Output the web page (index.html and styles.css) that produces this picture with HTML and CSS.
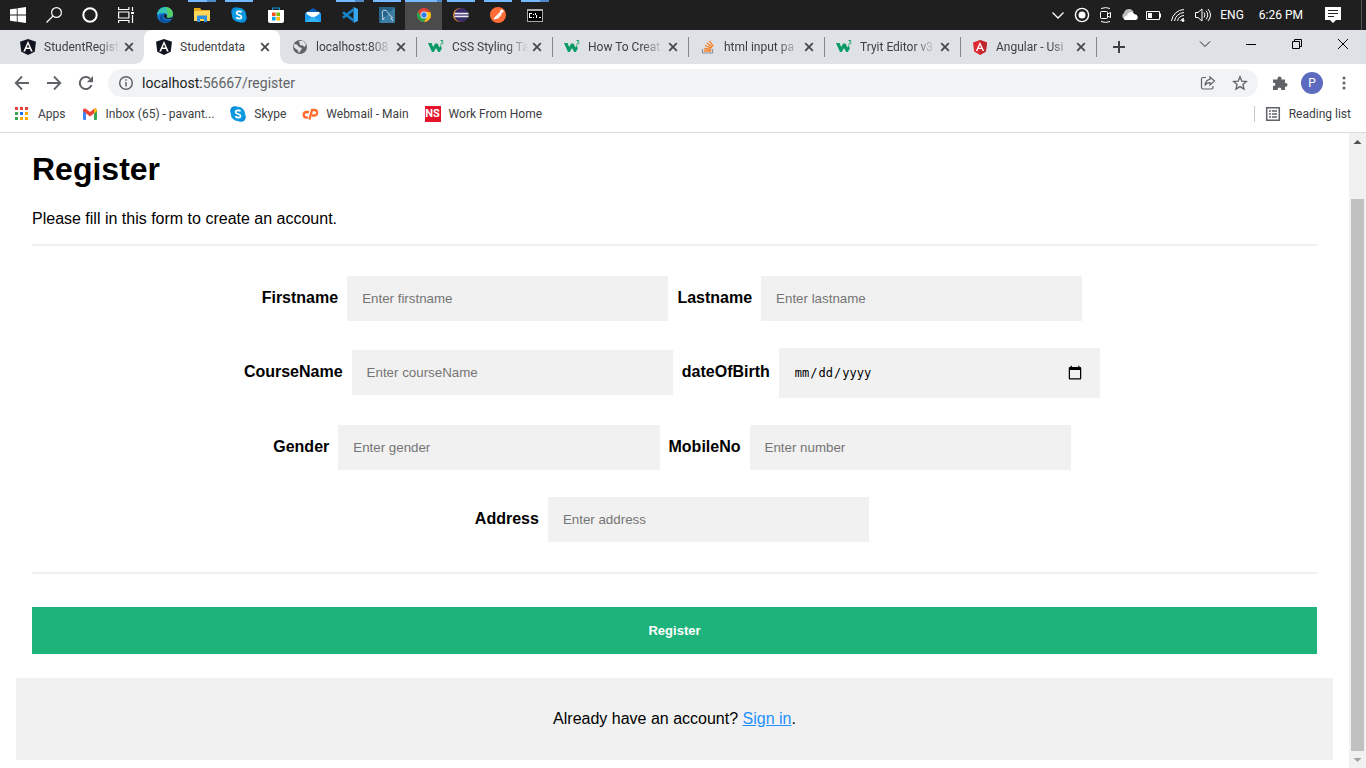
FILE: index.html
```html
<!DOCTYPE html>
<html lang="en">
<head>
<meta charset="utf-8">
<title>Studentdata</title>
<link rel="stylesheet" href="styles.css">
</head>
<body>
<svg class="defs" aria-hidden="true">
  <symbol id="close" viewBox="0 0 16 16"><path d="M4.2 4.2l7.6 7.6M11.8 4.2l-7.6 7.6" stroke="#45494d" stroke-width="1.8" fill="none"/></symbol>
  <symbol id="angular-dark" viewBox="0 0 16 16"><path d="M8 0l8 2.7-1.3 10L8 16l-6.700-3.300L0 2.700z" fill="#10141f"/><path d="M8 2L3.300 12.400h1.800l.9-2.300h4l.9 2.300h1.800zm0 3.300l1.400 3.300H6.600z" fill="#fff"/></symbol>
  <symbol id="angular-red" viewBox="0 0 16 16"><path d="M8 1l7 2.400-1.100 9.200L8 16l-5.900-3.400L1 3.400z" fill="#dd2c33"/><path d="M8 1l7 2.400-1.100 9.200L8 16z" fill="#c0262e"/><path d="M8 3L3.800 12h1.600l.8-2h3.600l.8 2h1.600zm0 3l1.200 2.700H6.800z" fill="#fff"/></symbol>
  <symbol id="w3" viewBox="0 0 16 16"><path d="M0 4h3.500l1.800 4L7 4.500h2.500l2 4 1.300-2.500 1 3.500-2 3.500h-1.500L8 9l-2.200 4H4z" fill="#0a9a63"/><path d="M12.500 1.500h2.300L13.600 3c1.900 0 1.700 2.200-.2 2.200l-1-.4" stroke="#0a9a63" stroke-width=".9" fill="none"/></symbol>
  <symbol id="chev" viewBox="0 0 16 16"><path d="M2.500 5.500L8 11l5.500-5.500" stroke="currentColor" stroke-width="1.300" fill="none"/></symbol>
  <symbol id="skype" viewBox="0 0 16 16"><circle cx="5" cy="5" r="4.800" fill="#0a86d8"/><circle cx="11" cy="11" r="4.800" fill="#0a86d8"/><circle cx="8" cy="8" r="7.200" fill="#0b99e0"/><path d="M10.600 5.300C9.500 4 5.700 4 5.700 6.200c0 2.300 4.800 1.300 4.800 3.700 0 2.100-3.900 2.100-5.200.5" fill="none" stroke="#fff" stroke-width="1.700"/></symbol>
</svg>

<header class="browser">
  <nav class="taskbar" aria-label="Taskbar">
    <div class="system">
      <button class="slot" aria-label="Start"><svg viewBox="0 0 16 16" fill="#fff"><path d="M0 2.300L6.800 1.400v6.200H0zM7.600 1.300L16 0v7.600H7.600zM0 8.500h6.800v6.200L0 13.800zM7.600 8.500H16V16l-8.400-1.200z"/></svg></button>
      <button class="slot" aria-label="Search"><svg viewBox="0 0 16 16" fill="none" stroke="#fff" stroke-width="1.200"><circle cx="10.500" cy="5.500" r="4.900"/><path d="M7 9L.5 15.500"/></svg></button>
      <button class="slot" aria-label="Cortana"><svg viewBox="0 0 16 16" fill="none" stroke="#fff" stroke-width="2"><circle cx="8" cy="8" r="6.700"/></svg></button>
      <button class="slot" aria-label="Task view"><svg viewBox="0 0 16 16" fill="none" stroke="#fff" stroke-width="1.200"><path d="M.6 0v2.500h10.300V0M.6 16v-2.500h10.300V16M.6 5h10.300v6H.6zM14.500 0v4M14.500 8v8"/><path d="M13 5h3v2h-3z" fill="#fff" stroke="none"/></svg></button>
    </div>
    <div class="apps">
      <button class="app" aria-label="Edge"><svg viewBox="0 0 16 16"><circle cx="8" cy="8" r="8" fill="#1478d0"/><path d="M0 8C1 0 8 0 8 0c6 0 8 4.500 8 7.500C16 11 11 11.500 9.700 10c1.500-2 .3-4-2.700-4-3.500 0-6 1-7 2z" fill="#35c3b4"/><path d="M9 .1c5 .5 7 4.500 7 7.400 0 3-4.500 4-6.300 2.500 2-3 .3-7-.7-9.900z" fill="#62d14f" opacity=".75"/><path d="M6 7c-2 5 3 8 8 5.500-2.500 4-8 4-10.500 1.500C1.500 11 3 7.500 6 7z" fill="#0c4f9c"/><path d="M7.500 7c-2 2.500 0 6 7 4.800l.7-1.500C12 11.500 9 11 9.700 10c.7-1.500-.5-3-2.200-3z" fill="#1f1f1f"/></svg></button>
      <button class="app open multi" aria-label="File Explorer"><svg viewBox="0 0 16 16"><path d="M0 1h6l1.500 2H16v11H0z" fill="#e9a91c"/><path d="M0 4h16v10H0z" fill="#ffd55a"/><path d="M3 15V8.500h10V15h-3v-3H6v3z" fill="#2e8fe0"/></svg></button>
      <button class="app open" aria-label="Skype"><svg><use href="#skype"/></svg></button>
      <button class="app" aria-label="Store"><svg viewBox="0 0 16 16"><path d="M4.500 4V1h7v3" fill="none" stroke="#1592d6" stroke-width="1.200"/><path d="M0 3h16v11q0 2-2 2H2q-2 0-2-2z" fill="#fff"/><path d="M4 5.500h3.600v3.600H4z" fill="#f25022"/><path d="M8.400 5.500H12v3.600H8.400z" fill="#7fba00"/><path d="M4 9.900h3.600v3.600H4z" fill="#00a4ef"/><path d="M8.400 9.900H12v3.600H8.400z" fill="#ffb900"/></svg></button>
      <button class="app" aria-label="Mail"><svg viewBox="0 0 16 16"><path d="M0 6l8-5 8 5v9H0z" fill="#0a5fb4"/><path d="M1.500 5h13v6h-13z" fill="#fff"/><path d="M0 6l8 5 8-5v9H0z" fill="#1c9cf0"/><path d="M0 15l8-5.500L16 15z" fill="#35b6fa"/></svg></button>
      <button class="app open multi" aria-label="Visual Studio Code"><svg viewBox="0 0 16 16"><path d="M11.500 0L16 2v12l-4.500 2z" fill="#35a7ee"/><path d="M1 5.300l10.500 8.200M1 10.700L11.500 2.500" stroke="#1684ca" stroke-width="2.600"/></svg></button>
      <button class="app open" aria-label="MySQL Workbench"><svg viewBox="0 0 16 16"><rect width="16" height="16" rx="1.500" fill="#3b7da3"/><path d="M0 0h16L0 16z" fill="#286489"/><path d="M3.500 13c1-3-1.500-8 1-9.800C8.500 3 9 6 10.500 8c1 1.500 2.500 1.500 3 3l-1.500.5 2 2.500M3.500 13l2-2.500" fill="none" stroke="#d9edf5" stroke-width=".9"/></svg></button>
      <button class="app open multi current" aria-label="Chrome"><svg viewBox="0 0 16 16"><circle cx="8" cy="8" r="7" fill="#e34133"/><path d="M1.900 4.500A7 7 0 0 0 8 15l3.500-5.500H5z" fill="#2ba24c"/><path d="M8 15a7 7 0 0 0 6.300-10H8l3.300 5z" fill="#fbc116"/><circle cx="8" cy="8" r="3.500" fill="#fff"/><circle cx="8" cy="8" r="2.700" fill="#2f7de9"/></svg></button>
      <button class="app open" aria-label="Eclipse"><svg viewBox="0 0 16 16"><circle cx="7" cy="8" r="7" fill="#e88a2e"/><circle cx="8.300" cy="8" r="7" fill="#392b68"/><path d="M1.500 6.500h14M1.500 9.500h14" stroke="#eceaf3" stroke-width="1.300"/><path d="M1.500 8h14" stroke="#978bb6"/></svg></button>
      <button class="app open" aria-label="Postman"><svg viewBox="0 0 16 16"><circle cx="8" cy="8" r="8" fill="#ff6c37"/><path d="M4 12l7.500-7.500M5 11.500l3-1 3.500-4" stroke="#fff" stroke-width="1.500" fill="none"/><circle cx="11.800" cy="4.300" r="1.700" fill="#fff"/></svg></button>
      <button class="app open multi" aria-label="Command Prompt"><svg viewBox="0 0 16 16" shape-rendering="crispEdges"><path d="M0 2h16v13H0z" fill="#aaa"/><path d="M1 4h14v10H1z" fill="#000"/><path d="M2 6h3v1H3v3h2v1H2zM6 7h1v1H6zM6 10h1v1H6zM8 6h1v2H8zM9 8h1v3H9zM12 10h2v1h-2z" fill="#fff"/></svg></button>
    </div>
    <div class="tray">
      <svg><use href="#chev"/></svg>
      <svg viewBox="0 0 16 16"><circle cx="8" cy="8" r="6.600" fill="none" stroke="#fff" stroke-width="1.400"/><circle cx="8" cy="8" r="3.500" fill="#fff"/></svg>
      <svg viewBox="0 0 16 16" fill="none" stroke="#fff"><rect x="2.500" y="4.500" width="7" height="7" rx="1"/><path d="M9.500 7l3-1.500v5l-3-1.500M3 1.500Q8-.3 12 1.500M3 14.500q5 1.800 9 0"/></svg>
      <svg viewBox="0 0 16 16"><path d="M2 12a3.500 3.500 0 0 1 0-6A5 5 0 0 1 11.500 5l-6 7z" fill="#bbb"/><path d="M2.500 13a3 3 0 0 1 2.500-4.500A4 4 0 0 1 12.500 7.300 3 3 0 0 1 14 13z" fill="#fff"/></svg>
      <svg viewBox="0 0 16 16" fill="none" stroke="#fff"><path d="M.5 4.500h13v8H.5z"/><path d="M14.500 6.500v4"/><path d="M2 6h4v5H2z" fill="#fff" stroke="none"/></svg>
      <svg viewBox="0 0 16 16" fill="none" stroke="#fff"><path d="M1.500 14A13 13 0 0 1 14 2.500M4.500 14A10 10 0 0 1 14 5.500M7.500 14A7 7 0 0 1 14 8.500M10.500 14A4 4 0 0 1 14 11.500"/><circle cx="13" cy="13.500" r="1" fill="#fff"/></svg>
      <svg class="wide" viewBox="0 0 18 16" fill="none" stroke="#fff"><path d="M1.500 5.500h2.500l4-3.500v12l-4-3.500H1.500zM10 5.500q2 2.500 0 5M12 3.700q3.500 4.300 0 8.600M14 2q5 6 0 12"/></svg>
      <span class="lang">ENG</span>
      <time class="clock">6:26 PM</time>
      <svg class="notes" viewBox="0 0 16 16"><path d="M0 0h16v13h-5l-3 3-3-3H0z" fill="#fff"/><path d="M3 3.500h10M3 6.500h10M3 9.500h6" stroke="#222"/></svg>
    </div>
  </nav>

  <div class="tabstrip">
    <div class="tab"><svg><use href="#angular-dark"/></svg><span>StudentRegist</span><button aria-label="Close tab"><svg><use href="#close"/></svg></button></div>
    <div class="tab active"><svg><use href="#angular-dark"/></svg><span>Studentdata</span><button aria-label="Close tab"><svg><use href="#close"/></svg></button></div>
    <div class="tab"><svg viewBox="0 0 16 16"><circle cx="8" cy="8" r="7" fill="#5f6368"/><path d="M2 5l3 .5L7 8l3 1-1 2-2 3-1.500-3L2 8.500zM7 2l4-.3 3 3.300-1 3-2.500-1.500L8 6z" fill="#dee1e6"/></svg><span>localhost:808</span><button aria-label="Close tab"><svg><use href="#close"/></svg></button></div>
    <div class="tab line"><svg><use href="#w3"/></svg><span>CSS Styling Ta</span><button aria-label="Close tab"><svg><use href="#close"/></svg></button></div>
    <div class="tab line"><svg><use href="#w3"/></svg><span>How To Creat</span><button aria-label="Close tab"><svg><use href="#close"/></svg></button></div>
    <div class="tab line"><svg viewBox="0 0 16 16" fill="none"><path d="M2.500 10v4h10v-4" stroke="#8d9297" stroke-width="1.200"/><path d="M4 12h7M4.200 9.500l6.900 1M5 6.500l6.500 2.700M6.800 3.800l5.400 4.400M9.600 1.800l3.600 5.500" stroke="#f48024" stroke-width="1.300"/></svg><span>html input pa</span><button aria-label="Close tab"><svg><use href="#close"/></svg></button></div>
    <div class="tab line"><svg><use href="#w3"/></svg><span>Tryit Editor v3</span><button aria-label="Close tab"><svg><use href="#close"/></svg></button></div>
    <div class="tab line"><svg><use href="#angular-red"/></svg><span>Angular - Usi</span><button aria-label="Close tab"><svg><use href="#close"/></svg></button></div>
    <button class="newtab line" aria-label="New tab"><svg viewBox="0 0 16 16"><path d="M8 2v12M2 8h12" stroke="#3c4043" stroke-width="2"/></svg></button>
    <div class="window">
      <button aria-label="Search tabs"><svg viewBox="0 0 16 16"><path d="M3 5.500l5 5 5-5" fill="none" stroke="#222"/></svg></button>
      <button aria-label="Minimize"><svg viewBox="0 0 16 16"><path d="M3 8.500h10" stroke="#000"/></svg></button>
      <button aria-label="Restore"><svg viewBox="0 0 16 16" fill="none" stroke="#000"><path d="M3.500 5.500h7v7h-7zM5.500 5.500v-2h7v7h-2"/></svg></button>
      <button aria-label="Close window"><svg viewBox="0 0 16 16"><path d="M3 3l10 10M13 3L3 13" stroke="#000"/></svg></button>
    </div>
  </div>

  <div class="toolbar">
    <button aria-label="Back"><svg viewBox="0 0 16 16" fill="none" stroke="#5f6368" stroke-width="1.800"><path d="M15 8H2M8 1.500L1.700 8 8 14.500"/></svg></button>
    <button aria-label="Forward"><svg viewBox="0 0 16 16" fill="none" stroke="#5f6368" stroke-width="1.800"><path d="M1 8h13M8 1.500L14.300 8 8 14.500"/></svg></button>
    <button aria-label="Reload"><svg viewBox="0 0 16 16"><path d="M13.500 10A6 6 0 1 1 12 3.700" fill="none" stroke="#5f6368" stroke-width="2"/><path d="M15 1v6.200H8.800z" fill="#5f6368"/></svg></button>
    <div class="omnibox">
      <svg viewBox="0 0 16 16" fill="none" stroke="#5f6368" stroke-width="1.500"><circle cx="8" cy="8" r="6.300"/><path d="M8 7v4.500M8 4.300v1.500"/></svg>
      <span class="url"><b>localhost:</b>56667/register</span>
      <button aria-label="Share"><svg viewBox="0 0 16 16" fill="none" stroke="#5f6368" stroke-width="1.200"><path d="M6 2.500H3q-1.500 0-1.500 1.500v8.500Q1.500 14 3 14h8.500q1.500 0 1.500-1.500V11"/><path d="M10 2l4.500 4L10 10V7.700q-3.500 0-5 2.800.5-5.500 5-6.200z"/></svg></button>
      <button aria-label="Bookmark this page"><svg viewBox="0 0 16 16"><path d="M8 1.800l1.800 4.300 4.600.4-3.500 3 1.100 4.600L8 11.600l-4 2.500 1.100-4.600-3.500-3 4.600-.4z" fill="none" stroke="#5f6368" stroke-width="1.300"/></svg></button>
    </div>
    <div class="profile">
      <button aria-label="Extensions"><svg viewBox="0 0 16 16"><path d="M1 4.500h4.500v-1a2 2 0 0 1 4 0v1H13V8h.7a1.800 1.800 0 0 1 0 3.700H13V15H9.300v-.8a1.800 1.800 0 0 0-3.600 0v.8H1v-4h.8a1.600 1.600 0 0 0 0-3.300H1z" fill="#5f6368"/></svg></button>
      <button class="avatar" aria-label="Profile">P</button>
      <button aria-label="Menu"><svg viewBox="0 0 16 16" fill="#5f6368"><circle cx="8" cy="3" r="1.500"/><circle cx="8" cy="8" r="1.500"/><circle cx="8" cy="13" r="1.500"/></svg></button>
    </div>
  </div>

  <nav class="bookmarks" aria-label="Bookmarks">
    <a href="#"><svg viewBox="0 0 16 16"><path d="M1 1h3v3H1zM6 1h3v3H6zM11 1h3v3h-3z" fill="#ea4335"/><path d="M1 6h3v3H1zM1 11h3v3H1z" fill="#34a853"/><path d="M6 6h3v3H6z" fill="#1a73e8"/><path d="M11 6h3v3h-3zM6 11h3v3H6zM11 11h3v3h-3z" fill="#f9ab00"/></svg>Apps</a>
    <a href="#"><svg viewBox="0 0 16 16"><path d="M1 4h3v10H2q-1 0-1-1z" fill="#4285f4"/><path d="M12 4h3v9q0 1-1 1h-2z" fill="#34a853"/><path d="M1 4.500q0-2.500 2.500-2L8 6l4.500-3.500Q15 2 15 4.500V5l-7 5.500L1 5z" fill="#ea4335"/><path d="M12 3l.5-.5Q15 2 15 4.500V5l-3 2.400z" fill="#fbbc04"/></svg>Inbox (65) - pavant...</a>
    <a href="#"><svg><use href="#skype"/></svg>Skype</a>
    <a href="#"><svg viewBox="0 0 16 16" fill="none" stroke="#ff6c2c" stroke-width="2.300"><path d="M7 6H4.500a2.800 2.800 0 0 0 0 5.600H6M7.500 13.500L10 4h2.500a2.500 2.500 0 0 1 0 5.500H10"/></svg>Webmail - Main</a>
    <a href="#"><span class="ns">NS</span>Work From Home</a>
    <a class="reading" href="#"><svg viewBox="0 0 16 16" fill="none" stroke="#5f6368"><path d="M1.700 1.700h12.600v12.600H1.700z" stroke-width="1.500"/><path d="M4 5h2M7 5h5M4 8h2M7 8h5M4 11h2M7 11h5" stroke-width="1.300"/></svg>Reading list</a>
  </nav>
</header>

<div class="view">
  <main>
    <form class="container">
      <h1>Register</h1>
      <p>Please fill in this form to create an account.</p>
      <hr>
      <div class="row">
        <label for="first">Firstname</label><input id="first" type="text" placeholder="Enter firstname">
        <label for="last">Lastname</label><input id="last" type="text" placeholder="Enter lastname">
      </div>
      <div class="row">
        <label for="course">CourseName</label><input id="course" type="text" placeholder="Enter courseName">
        <label for="dob">dateOfBirth</label><input id="dob" type="date">
      </div>
      <div class="row">
        <label for="gender">Gender</label><input id="gender" type="text" placeholder="Enter gender">
        <label for="mobile">MobileNo</label><input id="mobile" type="text" placeholder="Enter number">
      </div>
      <div class="row">
        <label for="address">Address</label><input id="address" type="text" placeholder="Enter address">
      </div>
      <hr class="last">
      <button class="submit" type="submit">Register</button>
    </form>
    <div class="signin"><p>Already have an account? <a href="#">Sign in</a>.</p></div>
  </main>
  <div class="scrollbar" aria-hidden="true">
    <svg viewBox="0 0 17 17"><path d="M4.500 11h8L8.500 7z" fill="#505050"/></svg>
    <div class="thumb"></div>
    <svg viewBox="0 0 17 17"><path d="M4.500 7h8l-4 4z" fill="#a3a3a3"/></svg>
  </div>
</div>
</body>
</html>
```
FILE: styles.css
```css
* { box-sizing: border-box; }
body {
  margin: 0;
  min-height: 100vh;
  display: flex;
  flex-direction: column;
  background: #fff;
  font-family: "Liberation Sans", Arial, sans-serif;
}
.defs { position: absolute; width: 0; height: 0; }
.browser { font: 12px/16px Roboto, sans-serif; color: #3c4043; }
.browser svg { width: 16px; height: 16px; flex: none; display: block; }
.browser button {
  border: 0;
  padding: 0;
  background: none;
  color: inherit;
  font: inherit;
  display: flex;
  align-items: center;
  justify-content: center;
}

/* Taskbar */
.taskbar { display: flex; height: 30px; background: #1f1f1f; color: #fff; }
.system, .apps { display: flex; }
.apps { margin-left: 2px; }
.taskbar .slot { width: 36px; }
.taskbar .app { width: 37px; position: relative; }
.app.open::before {
  content: "";
  position: absolute;
  top: 0;
  left: 5px;
  right: 4px;
  height: 2px;
  background: #76b9ff;
}
.app.multi::before { background: linear-gradient(to right, #76b9ff 19px, #5088c8 19px); }
.browser .taskbar .current { background: #4b4b4b; }
.app.current::before { left: 0; right: 0; background: linear-gradient(to right, #76b9ff 32px, #5088c8 32px); }
.tray {
  display: flex;
  align-items: center;
  gap: 8px;
  margin-left: auto;
  margin-right: 4px;
  padding-right: 20px;
  border-right: 1px solid #555;
}
.tray .wide { width: 18px; }
.clock { margin-left: 7px; }
.tray .notes { margin-left: 14px; }

/* Tabs */
.tabstrip { display: flex; height: 34px; padding-left: 8px; background: #dee1e6; }
.tab {
  display: flex;
  align-items: center;
  flex: 0 1 136px;
  min-width: 0;
  padding: 0 7px 0 12px;
}
.tab span {
  flex: 1;
  margin: 0 0 0 8px;
  white-space: nowrap;
  mask-image: linear-gradient(to right, #000 54px, transparent 76px);
}
.tab.active { position: relative; background: #fff; border-radius: 8px 8px 0 0; }
.tab.active span { mask-image: none; }
.tab.active::before, .tab.active::after {
  content: "";
  position: absolute;
  bottom: 0;
  width: 8px;
  height: 8px;
}
.tab.active::before { right: 100%; background: radial-gradient(circle at 0 0, transparent 7px, #fff 8px); }
.tab.active::after { left: 100%; background: radial-gradient(circle at 100% 0, transparent 7px, #fff 8px); }
.tabstrip .line {
  background: linear-gradient(#80868b, #80868b) left 7px / 1px 20px no-repeat;
}
.tabstrip .newtab { width: 46px; }
.window { display: flex; margin-left: auto; align-items: center; height: 28px; }
.browser .window button { width: 46px; height: 28px; }

/* Toolbar */
.toolbar { display: flex; align-items: center; height: 37px; padding: 0 14px; gap: 16px; }
.omnibox {
  flex: 1;
  display: flex;
  align-items: center;
  height: 28px;
  padding: 0 10px;
  margin-left: -2px;
  border-radius: 14px;
  background: #f1f3f4;
}
.url { flex: 1; margin-left: 8px; font-size: 14px; color: #5f6368; }
.url b { font-weight: 400; color: #202124; }
.omnibox button + button { margin-left: 16px; }
.profile { display: flex; align-items: center; gap: 13px; margin-left: -2px; }
.browser .avatar { width: 22px; height: 22px; border-radius: 50%; background: #5c6bc0; color: #fff; }

/* Bookmarks */
.bookmarks {
  display: flex;
  align-items: center;
  gap: 16px;
  height: 32px;
  padding: 0 15px 6px 14px;
  border-bottom: 1px solid #dadce0;
}
.bookmarks a { display: flex; align-items: center; gap: 8px; color: inherit; text-decoration: none; white-space: nowrap; }
.bookmarks .reading { margin-left: auto; border-left: 1px solid #c8cacd; padding-left: 10px; }
.ns { width: 16px; background: #e3142c; color: #fff; font-size: 11px; font-weight: 700; text-align: center; }

/* Page */
.view { flex: 1; display: flex; }
main { flex: 1; padding: 0 16px 8px; }
.container { padding: 18px 16px 24px; }
h1 { margin: 0 0 22px; font-size: 32px; line-height: 37px; }
p { margin: 0; font-size: 16px; line-height: 18px; }
hr { margin: 16px 0 25px; border: 1px solid #f1f1f1; }
hr.last { margin: 8px 0 33px; }
.row {
  display: flex;
  justify-content: center;
  align-items: baseline;
  gap: 9px;
  padding: 5px 0 22px;
}
.row label { font-size: 16px; font-weight: 700; line-height: 18px; }
.row label:first-child { margin-left: -5px; }
.row input {
  width: 25%;
  height: 45px;
  padding: 15px;
  border: 0;
  background: #f1f1f1;
  font-family: "Liberation Sans", Arial, sans-serif;
}
.row input::placeholder { color: #757575; }
.row input[type="date"] { height: 50px; font: 12px "DejaVu Sans Mono", monospace; }
.row input::-webkit-calendar-picker-indicator { font-size: 16px; }
.submit {
  display: block;
  width: 100%;
  height: 47px;
  border: 0;
  background: #1fb37c;
  color: #fff;
  font: 700 13px "Liberation Sans", Arial, sans-serif;
}
.signin { padding: 32px 0; background: #f1f1f1; text-align: center; }
.signin a { color: #1e90ff; }
.scrollbar { display: flex; flex-direction: column; width: 17px; background: #f1f1f1; }
.scrollbar svg { width: 17px; height: 17px; }
.thumb { flex: 1; margin: 49px 2px 0; background: #c1c1c1; }
```
